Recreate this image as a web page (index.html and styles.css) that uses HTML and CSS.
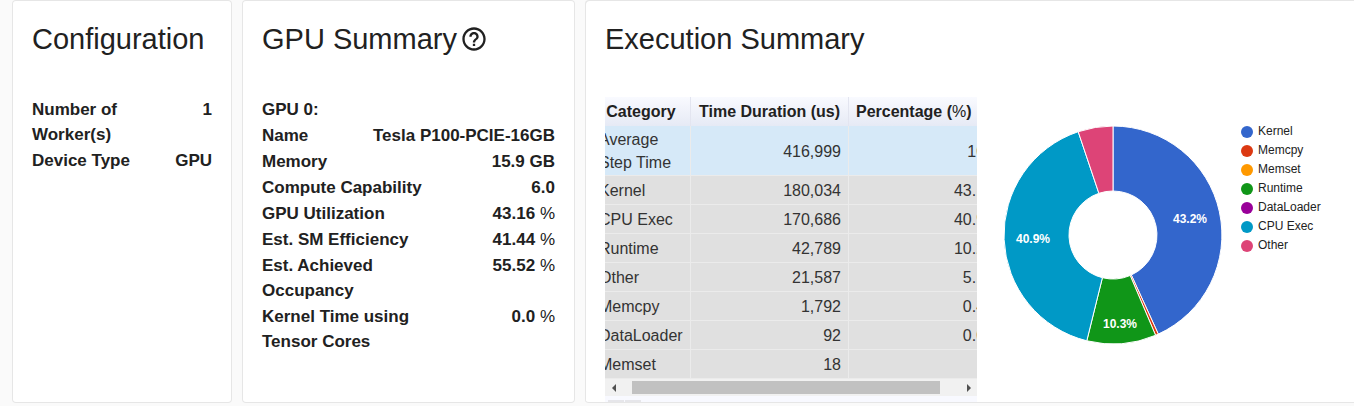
FILE: index.html
```html
<!DOCTYPE html>
<html lang="en">
<head>
    <meta charset="UTF-8">
    <meta name="viewport" content="width=device-width, initial-scale=1.0">
    <title>Overview</title>
    <link rel="stylesheet" href="styles.css">
</head>
<body>
    <main class="overview">
        <section class="card">
            <h2 class="card-title">Configuration</h2>
            <dl class="facts">
                <div class="fact"><dt>Number of Worker(s)</dt><dd>1</dd></div>
                <div class="fact"><dt>Device Type</dt><dd>GPU</dd></div>
            </dl>
        </section>

        <section class="card">
            <h2 class="card-title">
                GPU Summary
                <button class="help" type="button" aria-label="Help">
                    <svg viewBox="0 0 24 24" width="28" height="28">
                        <path d="M11 18h2v-2h-2v2zm1-16C6.480 2 2 6.480 2 12s4.480 10 10 10 10-4.480 10-10S17.520 2 12 2zm0 18c-4.410 0-8-3.590-8-8s3.590-8 8-8 8 3.590 8 8-3.590 8-8 8zm0-14c-2.210 0-4 1.790-4 4h2c0-1.100.900-2 2-2s2 .900 2 2c0 2-3 1.750-3 5h2c0-2.250 3-2.500 3-5 0-2.210-1.790-4-4-4z"/>
                    </svg>
                </button>
            </h2>
            <dl class="facts">
                <div class="fact"><dt>GPU 0:</dt></div>
                <div class="fact"><dt>Name</dt><dd>Tesla P100-PCIE-16GB</dd></div>
                <div class="fact"><dt>Memory</dt><dd>15.9 GB</dd></div>
                <div class="fact"><dt>Compute Capability</dt><dd>6.0</dd></div>
                <div class="fact"><dt>GPU Utilization</dt><dd>43.16 <span class="unit">%</span></dd></div>
                <div class="fact"><dt>Est. SM Efficiency</dt><dd>41.44 <span class="unit">%</span></dd></div>
                <div class="fact"><dt>Est. Achieved Occupancy</dt><dd>55.52 <span class="unit">%</span></dd></div>
                <div class="fact"><dt>Kernel Time using Tensor Cores</dt><dd>0.0 <span class="unit">%</span></dd></div>
            </dl>
        </section>

        <section class="card card-execution">
            <h2 class="card-title">Execution Summary</h2>
            <div class="execution">
                <div class="table-box">
                    <table class="steps">
                        <thead>
                            <tr>
                                <th class="col-category">Category</th>
                                <th class="col-time">Time Duration (us)</th>
                                <th class="col-percent">Percentage (<span class="unit">%</span>)</th>
                            </tr>
                        </thead>
                        <tbody>
                            <tr class="selected"><td>Average Step Time</td><td>416,999</td><td>100</td></tr>
                            <tr><td>Kernel</td><td>180,034</td><td>43.17</td></tr>
                            <tr><td>CPU Exec</td><td>170,686</td><td>40.93</td></tr>
                            <tr><td>Runtime</td><td>42,789</td><td>10.26</td></tr>
                            <tr><td>Other</td><td>21,587</td><td>5.18</td></tr>
                            <tr><td>Memcpy</td><td>1,792</td><td>0.43</td></tr>
                            <tr><td>DataLoader</td><td>92</td><td>0.02</td></tr>
                            <tr><td>Memset</td><td>18</td><td></td></tr>
                        </tbody>
                    </table>
                    <div class="scrollbar">
                        <button class="scroll-button" type="button" aria-label="Scroll left">
                            <svg viewBox="0 0 8 8" width="8" height="8"><path d="M6 0v8L2 4z"/></svg>
                        </button>
                        <div class="scroll-track"><div class="scroll-thumb"></div></div>
                        <button class="scroll-button" type="button" aria-label="Scroll right">
                            <svg viewBox="0 0 8 8" width="8" height="8"><path d="M2 0v8l4-4z"/></svg>
                        </button>
                    </div>
                    <div class="pager">
                        <button class="page-button" type="button" aria-label="Previous page"></button>
                        <button class="page-button" type="button" aria-label="Next page"></button>
                    </div>
                </div>

                <div class="chart">
                    <svg class="pie" viewBox="0 0 220 220" width="220" height="220">
                        <path class="kernel" d="M110 1A109 109 0 0 1 155.300 209.100L128.300 150A44 44 0 0 0 110 66z"/>
                        <path class="memcpy" d="M155.300 209.100A109 109 0 0 1 152.600 210.300L127.200 150.500A44 44 0 0 0 128.300 150z"/>
                        <path class="runtime" d="M152.600 210.300A109 109 0 0 1 83.800 215.800L99.400 152.700A44 44 0 0 0 127.200 150.500z"/>
                        <path class="cpu" d="M83.800 215.800A109 109 0 0 1 75.200 6.700L95.900 68.300A44 44 0 0 0 99.400 152.700z"/>
                        <path class="other" d="M75.200 6.700A109 109 0 0 1 110 1L110 66A44 44 0 0 0 95.900 68.300z"/>
                        <text x="187" y="98">43.2%</text>
                        <text x="117" y="203">10.3%</text>
                        <text x="30" y="118">40.9%</text>
                    </svg>
                    <ul class="legend">
                        <li><span class="dot dot-kernel"></span>Kernel</li>
                        <li><span class="dot dot-memcpy"></span>Memcpy</li>
                        <li><span class="dot dot-memset"></span>Memset</li>
                        <li><span class="dot dot-runtime"></span>Runtime</li>
                        <li><span class="dot dot-dataloader"></span>DataLoader</li>
                        <li><span class="dot dot-cpu"></span>CPU Exec</li>
                        <li><span class="dot dot-other"></span>Other</li>
                    </ul>
                </div>
            </div>
        </section>
    </main>
</body>
</html>
```

FILE: styles.css
```css
* {
    box-sizing: border-box;
}
body {
    margin: 0;
    background-color: #fafafa;
    color: #212121;
    font-family: "Liberation Sans", Arial, sans-serif;
}
button {
    border: none;
    padding: 0;
    background: none;
    cursor: pointer;
}
.overview {
    display: grid;
    grid-template-columns: 220fr 333fr 769fr;
    gap: 10px;
    padding-left: 12px;
}
.card {
    min-width: 0;
    padding: 20px;
    background-color: #fff;
    border-radius: 4px;
    box-shadow: inset 0 0 0 1px #e6e6e6;
}
.card-execution {
    padding: 20px 0 1px 20px;
    border-radius: 4px 0 0 4px;
    box-shadow: inset 1px 1px 0 #e6e6e6, inset 0 -1px 0 #e6e6e6;
}
.card-title {
    display: flex;
    align-items: center;
    gap: 3px;
    height: 38px;
    margin: 0 0 39px;
    font-size: 29px;
    font-weight: normal;
    white-space: nowrap;
}
.help {
    display: flex;
    color: inherit;
}
.help svg {
    fill: #212121;
}

/* label and value lists */
.facts {
    display: flex;
    flex-direction: column;
    gap: 1px;
    margin: 0;
    font-size: 17px;
    font-weight: bold;
    line-height: 25px;
}
.fact {
    display: flex;
    justify-content: space-between;
}
.fact dt {
    max-width: 60%;
}
.fact dd {
    margin: 0;
    white-space: nowrap;
}
.unit {
    font-weight: normal;
}

/* execution table */
.execution {
    display: flex;
    gap: 26px;
}
.table-box {
    flex: none;
    width: 372px;
    height: 305px;
    overflow: hidden;
    background-color: #f8f9ff;
}
.steps {
    width: 410px;
    margin-left: -13px; /* scrolled a little to the right */
    table-layout: fixed;
    border-collapse: separate;
    border-spacing: 0;
    font-size: 16px;
    line-height: 23px;
}
.steps th {
    height: 29px;
    padding: 0 7px;
    background: linear-gradient(#f9faff, #e6eaf5);
    border-right: 1px solid #e3e5f0;
    white-space: nowrap;
}
.steps .col-category {
    width: 99px;
}
.steps .col-time {
    width: 158px;
}
.steps .col-percent {
    padding-right: 30px;
}
.steps td {
    height: 29px;
    padding: 2px 7px 1px;
    background-color: #e0e0e0;
    border-right: 1px solid #ebebeb;
    border-bottom: 1px solid #ebebeb;
    color: #333;
    text-align: right;
}
.steps td:first-child {
    text-align: left;
}
.steps .selected td {
    background-color: #d6e9f8;
}
.scrollbar {
    display: flex;
    height: 17px;
    background-color: #f1f1f1;
}
.scroll-button {
    display: flex;
    align-items: center;
    justify-content: center;
    width: 17px;
}
.scroll-button svg {
    fill: #505050;
}
.scroll-track {
    flex: 1;
    padding: 2px 20px 2px 10px;
}
.scroll-thumb {
    height: 13px;
    background-color: #c1c1c1;
}
.pager {
    display: flex;
    gap: 1px;
    padding: 4px 3px;
}
.page-button {
    width: 16px;
    height: 20px;
    background-color: #e6e6ea;
}

/* donut chart */
.chart {
    display: flex;
    gap: 18px;
    padding-top: 25px;
}
.pie {
    flex: none;
    margin-top: 3px;
}
.pie path {
    stroke: #fff;
    stroke-width: 1;
}
.pie text {
    fill: #fff;
    font-size: 12px;
    font-weight: bold;
    text-anchor: middle;
}
.kernel {
    fill: #3366cc;
}
.memcpy {
    fill: #dc3912;
}
.runtime {
    fill: #109618;
}
.cpu {
    fill: #0099c6;
}
.other {
    fill: #dd4477;
}
.legend {
    margin: 0;
    padding: 0;
    list-style: none;
    font-size: 12px;
    line-height: 19px;
    color: #222;
}
.legend li {
    display: flex;
    align-items: center;
    gap: 5px;
}
.dot {
    width: 12px;
    height: 12px;
    border-radius: 50%;
}
.dot-kernel {
    background-color: #3366cc;
}
.dot-memcpy {
    background-color: #dc3912;
}
.dot-memset {
    background-color: #ff9900;
}
.dot-runtime {
    background-color: #109618;
}
.dot-dataloader {
    background-color: #990099;
}
.dot-cpu {
    background-color: #0099c6;
}
.dot-other {
    background-color: #dd4477;
}
```
